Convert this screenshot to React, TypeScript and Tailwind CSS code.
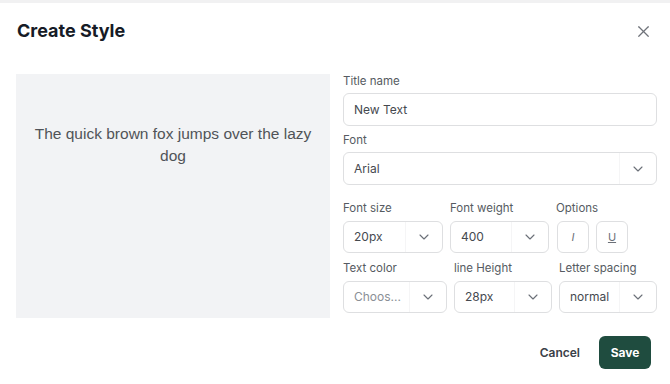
import React from 'react';
import { ChevronDown, X } from 'lucide-react';

interface SelectBoxProps {
    value: string;
    muted?: boolean;
}

const SelectBox: React.FC<SelectBoxProps> = ({ value, muted }) => (
    <div className="flex h-[32px] items-stretch rounded-md border border-[#dedfe1] bg-white">
        <div className={`flex flex-1 items-center pl-[10px] text-[12px] ${muted ? 'text-[#8a8f96]' : 'text-[#45494f]'}`}>
            {value}
        </div>
        <div className="flex w-[37px] items-center justify-center border-l border-[#f5f5f6]">
            <ChevronDown className="h-[16px] w-[16px] text-[#6b7078]" strokeWidth={1.7} />
        </div>
    </div>
);

const Label: React.FC<{ children: React.ReactNode; className?: string }> = ({ children, className }) => (
    <div className={`h-[14px] text-[11.5px] leading-[14px] text-[#565b62] ${className || ''}`}>{children}</div>
);

export default function App() {
    return (
        <div
            className="flex h-[384px] w-[670px] flex-col border-t-[3px] border-[#f1f1f2] bg-white"
            style={{ fontFamily: 'Inter, "Liberation Sans", sans-serif' }}
        >
            {/* header */}
            <div className="flex items-center justify-between pl-[17px] pr-[17px] pt-[17px]">
                <h1 className="text-[18px] font-bold leading-[22px] text-[#161b26]">Create Style</h1>
                <X className="h-[19px] w-[19px] text-[#6f737a]" strokeWidth={1.5} />
            </div>

            <div className="mt-[32px] flex gap-[13px] pl-[16px] pr-[13px]">
                {/* preview */}
                <div className="h-[244px] w-[314px] bg-[#f2f3f5] px-[10px] pt-[49px]">
                    <p
                        className="text-center text-[15.5px] leading-[22px] text-[#505358]"
                        style={{ fontFamily: '"Liberation Sans", Arial, sans-serif' }}
                    >
                        The quick brown fox jumps over the lazy dog
                    </p>
                </div>

                {/* form */}
                <div className="flex w-[314px] flex-col">
                    <Label>Title name</Label>
                    <div className="mt-[5px] flex h-[33px] items-center rounded-md border border-[#dedfe1] pl-[10px] text-[12px] text-[#45494f]">
                        New Text
                    </div>

                    <Label className="mt-[7px]">Font</Label>
                    <div className="mt-[5px] flex h-[33px] items-stretch rounded-md border border-[#dedfe1]">
                        <div className="flex flex-1 items-center pl-[10px] text-[12px] text-[#45494f]">Arial</div>
                        <div className="flex w-[37px] items-center justify-center border-l border-[#f5f5f6]">
                            <ChevronDown className="h-[16px] w-[16px] text-[#6b7078]" strokeWidth={1.7} />
                        </div>
                    </div>

                    <div className="mt-[16px] grid grid-cols-[100px_99px_1fr] gap-x-[7px]">
                        <Label>Font size</Label>
                        <Label>Font weight</Label>
                        <Label>Options</Label>
                        <div className="mt-[6px]"><SelectBox value="20px" /></div>
                        <div className="mt-[6px]"><SelectBox value="400" /></div>
                        <div className="mt-[6px] flex gap-[7px] pl-[1px]">
                            <div className="flex h-[32px] w-[32px] items-center justify-center rounded-md border border-[#dedfe1] text-[11px] italic text-[#6b7078]">I</div>
                            <div className="flex h-[32px] w-[32px] items-center justify-center rounded-md border border-[#dedfe1] text-[11px] text-[#6b7078] underline">U</div>
                        </div>
                    </div>

                    <div className="mt-[8px] grid grid-cols-[104px_98px_98px] gap-x-[7px]">
                        <Label>Text color</Label>
                        <Label>line Height</Label>
                        <Label>Letter spacing</Label>
                        <div className="mt-[6px]"><SelectBox value="Choos..." muted /></div>
                        <div className="mt-[6px]"><SelectBox value="28px" /></div>
                        <div className="mt-[6px]"><SelectBox value="normal" /></div>
                    </div>
                </div>
            </div>

            {/* footer */}
            <div className="mt-[18px] flex items-center justify-end gap-[19px] pr-[19px]">
                <button className="text-[12px] font-semibold text-[#3b4048]">Cancel</button>
                <button className="h-[33px] w-[52px] rounded-md bg-[#1f4c3f] text-[12px] font-bold text-white">Save</button>
            </div>
        </div>
    );
}
